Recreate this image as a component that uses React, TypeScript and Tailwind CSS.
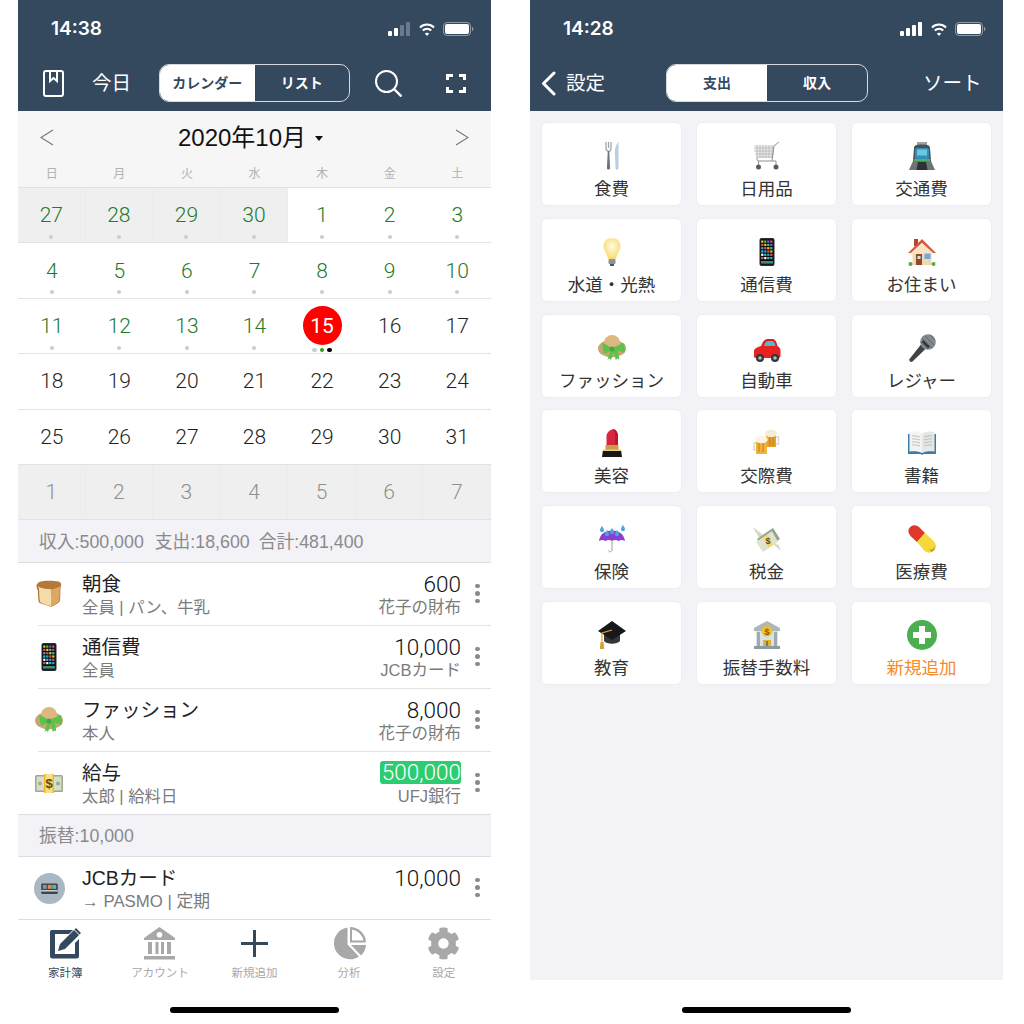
import { ReactNode } from "react";
import { FaCog } from "react-icons/fa";

const Svg = ({ children, size = 28 }: { children: ReactNode; size?: number }) => (
	<svg width={size} height={size} viewBox="0 0 28 28" className="shrink-0">
		{children}
	</svg>
);

const Bread = () => (
	<Svg size={28}>
		<path d="M1.500 6c0-3 3-4.500 7-5 5-.6 11-.5 15 .5 2 .5 3 2 2.600 4-.2 1.500-.6 2-.6 3l-.4 11.500c0 2-3 4-7 6-1 .5-2.500 .8-3.600 .2C11 25 6 24 4 22.500 3.200 21 3 14 2.900 10.500 2.300 9 1.500 8 1.500 6z" fill="#b8773a" />
		<path d="M3 6.500c3 1.800 8 2.500 13 2.800.8 5 .8 11 .4 17C12 25 7.500 24 5 22c-.8-4-.7-10-1-13.500C3.500 8 3 7 3 6.500z" fill="#f1dcaa" />
		<path d="M16 9.300c3-.2 6.500-1.500 9-3-.3 5-.5 10-.8 14.500-1.500 2-4.500 4-7.800 5.500.4-6 .4-12-.4-17z" fill="#dca864" />
	</Svg>
);

const screenColors = ["#f0c330", "#e74c8c", "#3aa0e0", "#52c26b", "#ffffff", "#e2574c", "#7d5bd0", "#35c2c9"];

const Phone = () => (
	<Svg>
		<rect x="6.500" y="0" width="15" height="28" rx="2" fill="#2b2b2f" />
		<rect x="7.500" y="1.500" width="13" height="25" fill="#0b0b0d" />
		{Array.from({ length: 24 }).map((_, i) => (
			<rect
				key={i}
				x={8.2 + (i % 4) * 3}
				y={2.5 + Math.floor(i / 4) * 3.3}
				width="2.200"
				height="2.200"
				fill={screenColors[(i * 3 + Math.floor(i / 4)) % 8]}
			/>
		))}
		<rect x="8" y="23" width="12" height="2.600" fill="#3f8f77" />
	</Svg>
);

const Hat = () => (
	<Svg>
		<ellipse cx="14" cy="14.500" rx="14" ry="9" fill="#c7a675" />
		<circle cx="14" cy="9" r="8" fill="#dcb77f" />
		<path d="M14 14 6 9.500c-1-.5-2 0-1.800 1l1.300 8c.2 1 1 1.200 2 .8l5-2.300-3 8.500 2.500-1 .8 2 3-8.500 2 8 1.500-1.500 2 1-1.500-9 5.500 2c1 .3 1.600-.3 1.600-1.200l-.4-7c0-1-1-1.400-2-.9z" fill="#5cc24a" />
		<circle cx="14" cy="15" r="2.500" fill="#49a63a" />
	</Svg>
);

const Money = () => (
	<Svg>
		<rect x="0" y="6" width="28" height="17" rx="1.500" fill="#9fa88f" />
		<rect x="1.500" y="7.500" width="25" height="14" fill="#d8dccb" />
		<circle cx="5" cy="14.500" r="2" fill="#a6b095" />
		<circle cx="23" cy="14.500" r="2" fill="#8fb08f" />
		<rect x="9" y="5" width="10" height="19" fill="#f8e08a" />
		<rect x="9" y="5" width="1.500" height="19" fill="#f3b81f" />
		<rect x="17.500" y="5" width="1.500" height="19" fill="#f3b81f" />
		<text x="14" y="19" textAnchor="middle" fontSize="13" fontWeight="700" fill="#5a4a20" fontFamily="Liberation Sans">$</text>
	</Svg>
);

const CardBadge = () => (
	<Svg size={31}>
		<circle cx="14" cy="14" r="14" fill="#a9b8c2" />
		<rect x="6.500" y="9.500" width="15" height="9.500" rx="1" fill="#3d4650" />
		<rect x="8" y="10.800" width="3.500" height="3.500" fill="#8a949c" />
		<rect x="12.500" y="10.800" width="3.500" height="3.500" fill="#df8a4f" />
		<rect x="16.500" y="10.800" width="3.500" height="3.500" fill="#5cb8a5" />
		<rect x="6.500" y="15.500" width="15" height="1.200" fill="#dfe4e8" />
	</Svg>
);

const Cutlery = () => (
	<Svg>
		<path d="M8 0v6M10.500 0v6M13 0v6M8 6c0 2 1 3 2.500 3.500S13 8 13 6" stroke="#9aa1a7" strokeWidth="1.200" fill="none" />
		<path d="M9.800 9h1.400l.9 17c0 2-3.200 2-3.200 0z" fill="#6d7379" />
		<path d="M17 12c-.5-4 .5-9 3.500-12v26c0 2.400-3 2.400-3 0z" fill="#b7cfe2" />
	</Svg>
);

const Cart = () => (
	<Svg>
		<path d="M1 3h20l-1 13H4z" fill="#e7e9ea" />
		<path d="M1 6h20M1 9h20M2 12h19M3 15h17M4 3v13M7 3v13M10 3v13M13 3v13M16 3v13M19 3v13" stroke="#a9adb0" strokeWidth=".6" />
		<path d="M4 16c-.5 2 .5 3 2 3h17M21 4l5-4M21 4l-2 15" stroke="#8b9094" strokeWidth="1" fill="none" />
		<circle cx="5.500" cy="25" r="2.500" fill="#585c60" />
		<circle cx="23" cy="25" r="2.500" fill="#585c60" />
		<path d="M5.500 19v4M23 19v4" stroke="#8b9094" />
	</Svg>
);

const Train = () => (
	<Svg>
		<path d="M9 0h10v4H9z" fill="#9aa0a4" />
		<path d="M6 6c0-3 3-3.500 8-3.500s8 .5 8 3.500l1 13H5z" fill="#48505a" />
		<rect x="7" y="6" width="14" height="11" rx="1.500" fill="#2f8fb8" />
		<rect x="9" y="7.500" width="10" height="6" fill="#6cc6dc" />
		<rect x="6" y="17" width="16" height="2" fill="#4db35e" />
		<path d="M5 19h18l4 9H1z" fill="#6e7377" />
		<path d="M10 20h8l1.500 8h-11z" fill="#2d3136" />
	</Svg>
);

const Bulb = () => (
	<Svg>
		<defs>
			<radialGradient id="bulbGlow" cx="50%" cy="40%" r="60%">
				<stop offset="0%" stopColor="#fffbe0" />
				<stop offset="100%" stopColor="#f8db6e" />
			</radialGradient>
		</defs>
		<path d="M14 0c5 0 8.500 3.500 8.500 8 0 5-3.500 7-4.500 13h-8C9 15 5.500 13 5.500 8c0-4.500 3.500-8 8.500-8z" fill="url(#bulbGlow)" />
		<rect x="10.500" y="21" width="7" height="5" rx="1" fill="#8d9297" />
		<rect x="12" y="26" width="4" height="2" fill="#50555a" />
	</Svg>
);

const House = () => (
	<Svg>
		<rect x="6" y="1" width="4" height="7" fill="#b5442e" />
		<rect x="4.500" y="12" width="19" height="15" fill="#f0d9b0" />
		<path d="M14 1 0 15h3L14 5l11 10h3z" fill="#d9573c" />
		<path d="M14 5 3 15v1h22v-1z" fill="#f6e4c2" />
		<rect x="8" y="16" width="6" height="11" fill="#8f4a2c" />
		<rect x="9.500" y="18" width="3" height="3" fill="#c9e0ee" />
		<rect x="16.500" y="15.500" width="6" height="5.500" fill="#6fa8dc" />
		<circle cx="2.500" cy="26" r="2" fill="#5aa845" />
		<circle cx="25.500" cy="26" r="2" fill="#5aa845" />
	</Svg>
);

const Car = () => (
	<Svg>
		<path d="M9 10c1-3 3-5 6-5h4c3 0 4 2 5 5l1 4H7z" fill="#d9201f" />
		<path d="M11 12c.5-3 2-5 4.500-5H19c2 0 3 2 3.500 5z" fill="#5cb5c9" />
		<path d="M1 17c0-2.500 3-3.500 7-5h15c3 0 4.500 2 4.500 5v5c0 1-.6 2-2 2H3c-1.500 0-2-1-2-2z" fill="#e8221f" />
		<circle cx="7" cy="24" r="4" fill="#33363a" />
		<circle cx="7" cy="24" r="1.800" fill="#b5b9bd" />
		<circle cx="22" cy="24" r="4" fill="#33363a" />
		<circle cx="22" cy="24" r="1.800" fill="#b5b9bd" />
	</Svg>
);

const Mic = () => (
	<Svg>
		<path d="M15 8 19.500 13 4.500 27.500c-.8.700-1.800.6-2.600-.2-.8-.8-.9-1.800-.2-2.600z" fill="#3f4347" />
		<circle cx="20" cy="8" r="7.800" fill="#85898d" />
		<path d="M14 4l10 10M17 2l9 9M12.500 8l7.500 7M22 1l5 5" stroke="#5d6165" strokeWidth=".8" />
		<path d="M14.500 7 21 13.500" stroke="#2f3236" strokeWidth="2.400" />
	</Svg>
);

const Lipstick = () => (
	<Svg>
		<path d="M8.500 16V7c0-3 3-6 7-7 3 1 4.500 4 4.500 7v9z" fill="#d8263c" />
		<path d="M15.500 0c3 1 4.500 4 4.500 7v9h-3V5z" fill="#b31b30" />
		<rect x="7.500" y="16" width="13" height="5" fill="#c5a04a" />
		<path d="M5 21h18l1 7H4z" fill="#17171a" />
		<rect x="5" y="20.500" width="18" height="1.500" fill="#e8cd7c" />
	</Svg>
);

const Beers = () => (
	<Svg>
		<path d="M13 5h10v13H13z" fill="#e7a02e" />
		<path d="M23 8h2.500v7H23" stroke="#d6d6d0" strokeWidth="1.400" fill="none" />
		<ellipse cx="18" cy="4.500" rx="6" ry="3.800" fill="#f5ecd6" />
		<path d="M3 11h11v14H3z" fill="#f0b23a" />
		<path d="M3 14H1v7h2" stroke="#d6d6d0" strokeWidth="1.400" fill="none" />
		<ellipse cx="8.500" cy="10.500" rx="6.200" ry="3.800" fill="#fbf4e2" />
		<path d="M6 14v9M10 14v9M17 8v9M20 8v9" stroke="#c77a1b" strokeWidth="1" />
	</Svg>
);

const Book = () => (
	<Svg>
		<path d="M0 5h28v20H15.500l-1.500 1-1.500-1H0z" fill="#3d7ba8" />
		<path d="M1.500 3c5-1 9-.5 12.500 1.500V24c-3.500-1.800-8-2.300-12.500-1.500z" fill="#f3f4f2" />
		<path d="M26.500 3c-5-1-9-.5-12.500 1.500V24c3.500-1.800 8-2.300 12.500-1.500z" fill="#e6e8e6" />
		<path d="M4 7c3-.3 5 0 8 1M4 10c3-.3 5 0 8 1M4 13c3-.3 5 0 8 1M4 16c3-.3 5 0 8 1M24 7c-3-.3-5 0-8 1M24 10c-3-.3-5 0-8 1M24 13c-3-.3-5 0-8 1M24 16c-3-.3-5 0-8 1" stroke="#a7aba8" strokeWidth=".7" fill="none" />
	</Svg>
);

const Drop = ({ x, y }: { x: number; y: number }) => (
	<path d={`M${x} ${y}c1.300 2 2 3 2 4.200a2 2 0 0 1-4 0c0-1.200.7-2.200 2-4.200z`} fill="#4aa6e0" />
);

const Umbrella = () => (
	<Svg>
		<path d="M1 16C2 9 7 5.500 14 5.500S26 9 27 16c-2.500-1.500-4-1.500-6.500 0-2-1.500-4.500-1.500-6.500 0-2-1.500-4.500-1.500-6.500 0C5 14.500 3.500 14.500 1 16z" fill="#8a3fd1" />
		<path d="M14 15v10c0 2-3 2.500-3.500 .5" stroke="#9a9da0" strokeWidth="1" fill="none" />
		<Drop x={4} y={1} />
		<Drop x={9} y={5} />
		<Drop x={14} y={3} />
		<Drop x={19} y={5} />
		<Drop x={25} y={0} />
	</Svg>
);

const MoneyWings = () => (
	<Svg>
		<path d="M10 10 0 2l3 6 1 0 1 4 2 0 2 3zM18 17l10 9-3-7-2 1-1-4-2 0-1-3z" fill="#d3d6cb" />
		<path d="M4 14 20 3l7 11-16 11z" fill="#97a387" />
		<path d="M3 17 19 6l6 11-15 10z" fill="#dfe3d2" />
		<path d="M9.500 13 14.500 9.500l6 10-5 3.500z" fill="#f5d977" />
		<text x="15" y="19" textAnchor="middle" fontSize="9" fontWeight="700" fill="#5a4a20" fontFamily="Liberation Sans">$</text>
	</Svg>
);

const Pill = () => (
	<Svg>
		<path d="M3 11.500C-.5 8-.2 4 2.500 1.800 5-.5 8.500-.3 11.500 2.500l5.500 5.500-8 9z" fill="#e0372b" />
		<path d="M9 17l8-9 8.500 8c3 3 3.200 7 .5 9.500-2.800 2.800-6.800 3-10-.2z" fill="#f7d83a" />
		<path d="M21 24c3 1 5 0 6-3 .5 3-1 5-3.500 6z" fill="#c99f1e" />
	</Svg>
);

const Cap = () => (
	<Svg>
		<path d="M6 13v7c3 3.500 13 3.500 16 0v-7z" fill="#33363a" />
		<path d="M14 0 28 10 14 19 0 10z" fill="#17181a" />
		<path d="M14 9 4 12v10" stroke="#d8a13a" strokeWidth="1.200" fill="none" />
		<path d="M2.500 21h3l.8 7H1.800z" fill="#d8a13a" />
	</Svg>
);

const Bank = () => (
	<Svg>
		<path d="M14 0 27 7v3H1V7z" fill="#a9b7bf" />
		<path d="M3 10h22v15H3z" fill="#dbe2e5" />
		<path d="M4 11h3v14H4zM21 11h3v14h-3z" fill="#9dacb4" />
		<rect x="10" y="19" width="8" height="6" fill="#e4b02e" />
		<rect x="13" y="20" width="2" height="5" fill="#6c7a82" />
		<circle cx="14" cy="10" r="5.500" fill="#f0bf2b" />
		<text x="14" y="13.500" textAnchor="middle" fontSize="9" fontWeight="700" fill="#7a5a10" fontFamily="Liberation Sans">$</text>
		<rect x="1" y="25" width="26" height="3" fill="#8d9ca4" />
	</Svg>
);

const PlusCircle = () => (
	<svg width={30} height={30} viewBox="0 0 30 30" className="shrink-0">
		<circle cx="15" cy="15" r="15" fill="#4cae4f" />
		<path d="M12 6h6v6h6v6h-6v6h-6v-6H6v-6h6z" fill="#fff" />
	</svg>
);

const StatusBar = ({ time, bars }: { time: string; bars: number }) => (
	<div className="flex h-[58px] items-center justify-between pl-[33px] pr-[17px] text-white">
		<span className="pt-[1px] font-['Inter',sans-serif] text-[19px] font-semibold">{time}</span>
		<div className="flex items-center gap-[8px]">
			<svg width="23" height="14" viewBox="0 0 23 14">
				{[0, 1, 2, 3].map((i) => (
					<rect key={i} x={i * 6} y={9 - i * 3} width="4" height={5 + i * 3} rx="1" fill={i < bars ? "#fff" : "#6c7b8c"} />
				))}
			</svg>
			<svg width="16" height="13" viewBox="0 0 16 13" fill="none" stroke="#fff" strokeWidth="2.200">
				<path d="M1 4.500c4-4 10-4 14 0" stroke="#fff" />
				<path d="M3.800 7.500c2.500-2.300 6-2.300 8.400 0" />
				<path d="M8 13 5.800 10.500c1.200-1 3.200-1 4.400 0z" fill="#fff" stroke="none" />
			</svg>
			<svg width="31" height="14" viewBox="0 0 31 14">
				<rect x=".5" y=".5" width="27" height="13" rx="3.500" fill="none" stroke="#8e9aa6" />
				<rect x="2" y="2" width="24" height="10" rx="2" fill="#fff" />
				<path d="M29 5c1 .3 1.500 1 1.500 2s-.5 1.700-1.500 2z" fill="#8e9aa6" />
			</svg>
		</div>
	</div>
);

const Segment = ({ left, right, width }: { left: string; right: string; width: string }) => (
	<div className={`flex h-[38px] overflow-hidden rounded-[10px] border-[1.5px] border-[#d5dade] text-[14px] font-bold ${width}`}>
		<div className="flex flex-1 items-center justify-center bg-white text-[#34495e]">{left}</div>
		<div className="flex flex-1 items-center justify-center text-white">{right}</div>
	</div>
);

const Chevron = ({ dir }: { dir: "left" | "right" }) => (
	<svg width="14" height="17" viewBox="0 0 14 17" fill="none" stroke="#777" strokeWidth="1.100">
		<path d={dir === "left" ? "M13 1 1 8.500 13 16" : "M1 1l12 7.500L1 16"} />
	</svg>
);

type Day = { n: number; tone: "green" | "dark" | "muted"; dot?: boolean; prev?: boolean; today?: boolean };

const green = (n: number, prev = false): Day => ({ n, tone: "green", dot: true, prev });
const dark = (n: number): Day => ({ n, tone: "dark" });

const weeks: Day[][] = [
	[green(27, true), green(28, true), green(29, true), green(30, true), green(1), green(2), green(3)],
	[green(4), green(5), green(6), green(7), green(8), green(9), green(10)],
	[green(11), green(12), green(13), green(14), { n: 15, tone: "dark", today: true }, dark(16), dark(17)],
	[18, 19, 20, 21, 22, 23, 24].map(dark),
	[25, 26, 27, 28, 29, 30, 31].map(dark),
	[1, 2, 3, 4, 5, 6, 7].map((n) => ({ n, tone: "muted" as const, prev: true })),
];

const toneClass = { green: "text-[#237a2b]", dark: "text-[#1f1f1f]", muted: "text-[#8f8f8f]" };

const DayCell = ({ day }: { day: Day }) => (
	<div className={`flex flex-col items-center ${day.prev ? "border-r border-[#ebebeb] bg-[#efefef]" : ""}`}>
		<div className="mt-[7px] flex h-[40px] items-center justify-center">
			{day.today ? (
				<span className="flex h-[39px] w-[39px] items-center justify-center rounded-full bg-[#fe0000] pt-[1px] font-normal text-white">{day.n}</span>
			) : (
				<span className={`pt-[2px] ${toneClass[day.tone]}`}>{day.n}</span>
			)}
		</div>
		{day.dot && <span className="h-[4px] w-[4px] rounded-full bg-[#cccccc]" />}
		{day.today && (
			<div className="mt-[2px] flex gap-[3px]">
				<span className="h-[4.500px] w-[4.500px] rounded-full bg-[#cccccc]" />
				<span className="h-[4.500px] w-[4.500px] rounded-full bg-[#28a010]" />
				<span className="h-[4.500px] w-[4.500px] rounded-full bg-black" />
			</div>
		)}
	</div>
);

const Kebab = () => (
	<div className="ml-[14px] flex w-[5px] flex-col gap-[3px] pb-[2px]">
		<span className="h-[4.500px] w-[4.500px] rounded-full bg-[#8a8a8a]" />
		<span className="h-[4.500px] w-[4.500px] rounded-full bg-[#8a8a8a]" />
		<span className="h-[4.500px] w-[4.500px] rounded-full bg-[#8a8a8a]" />
	</div>
);

type Entry = { icon: ReactNode; title: string; sub: string; amount: string; account?: string; highlight?: boolean; last?: boolean };

const entries: Entry[] = [
	{ icon: <Bread />, title: "朝食", sub: "全員 | パン、牛乳", amount: "600", account: "花子の財布" },
	{ icon: <Phone />, title: "通信費", sub: "全員", amount: "10,000", account: "JCBカード" },
	{ icon: <Hat />, title: "ファッション", sub: "本人", amount: "8,000", account: "花子の財布" },
	{ icon: <Money />, title: "給与", sub: "太郎 | 給料日", amount: "500,000", account: "UFJ銀行", highlight: true, last: true },
];

const amountFont = "font-['Roboto',sans-serif] font-light";

const EntryRow = ({ entry }: { entry: Entry }) => (
	<div className={`bg-white pl-[20px] ${entry.last ? "h-[62px]" : "h-[63px]"}`}>
		<div className={`flex h-full items-center border-[#e3e3e3] pr-[11px] ${entry.last ? "" : "border-b"}`}>
			<div className="-ml-[20px] mr-[2px] flex w-[62px] shrink-0 justify-center">{entry.icon}</div>
			<div className="flex flex-1 items-center justify-between">
				<div className="flex flex-col">
					<span className="text-[19.500px] leading-[26px] text-[#222222]">{entry.title}</span>
					<span className="text-[16.400px] leading-[21px] text-[#7b7b7b]">{entry.sub}</span>
				</div>
				<div className="flex flex-col items-end">
					{entry.highlight ? (
						<span className={`my-[1.500px] rounded-[3px] bg-[#2ecc71] pl-[2px] text-[22.500px] leading-[23px] text-white ${amountFont}`}>{entry.amount}</span>
					) : (
						<span className={`text-[22.500px] leading-[26px] text-[#111111] ${amountFont}`}>{entry.amount}</span>
					)}
					<span className="text-[16.500px] leading-[21px] text-[#7b7b7b]">{entry.account}</span>
				</div>
			</div>
			<Kebab />
		</div>
	</div>
);

const EditIcon = () => (
	<svg width="33" height="33" viewBox="0 0 33 33">
		<path d="M2 3h22l-4 4H6v20h20V16l4-4v17a2.500 2.500 0 0 1-2.500 2.500h-24A2.500 2.500 0 0 1 1 29V5a2.500 2.500 0 0 1 1-2z" fill="#34495e" />
		<path d="M9 24l2-7L25 3l5 5-14 14zM27 1l5 5-1.500 1.500-5-5z" fill="#34495e" />
	</svg>
);

const BankIcon = () => (
	<svg width="33" height="33" viewBox="0 0 33 33" fill="#a8a8a8">
		<path fillRule="evenodd" d="M16.500 0 32 11v2H1v-2zm0 5a2.800 2.800 0 1 0 0 5.600 2.800 2.800 0 0 0 0-5.600z" />
		<path d="M5 15h4v12H5zM12.500 15h3v12h-3zM18 15h3v12h-3zM24 15h4v12h-4zM1 29h31v3.500H1z" />
	</svg>
);

const PlusIcon = () => (
	<svg width="27" height="27" viewBox="0 0 27 27" fill="#34495e">
		<path d="M12 0h3v12h12v3H15v12h-3V15H0v-3h12z" />
	</svg>
);

const PieIcon = () => (
	<svg width="33" height="33" viewBox="0 0 33 33" fill="#a8a8a8">
		<path d="M14.500 .5A16 16 0 1 0 26 29.500L14.500 17.500z" />
		<path fillRule="evenodd" d="M17 0a16 16 0 0 1 16 15.500H17zm2 2.500v11h11.500A14 14 0 0 0 19 2.500z" />
		<path d="M18 18h15a16 16 0 0 1-5 10.500z" />
	</svg>
);

const tabs = [
	{ label: "家計簿", icon: <EditIcon />, active: true },
	{ label: "アカウント", icon: <BankIcon /> },
	{ label: "新規追加", icon: <PlusIcon /> },
	{ label: "分析", icon: <PieIcon /> },
	{ label: "設定", icon: <FaCog size={33} color="#a8a8a8" /> },
];

const HomeBar = () => (
	<div className="flex justify-center bg-white pt-[27px]">
		<div className="h-[6px] w-[169px] rounded-full bg-black" />
	</div>
);

const LedgerScreen = () => (
	<div className="flex w-[473px] flex-col">
		<header className="h-[111px] bg-[#34495e]">
			<StatusBar time="14:38" bars={2} />
			<div className="mt-[6px] flex items-center pl-[25px] text-white">
				<svg width="21" height="27" viewBox="0 0 21 27" fill="none" stroke="#fff" strokeWidth="2">
					<rect x="1" y="1" width="19" height="25" rx="2" />
					<path d="M7 1v10l3.500-3 3.500 3V1" />
				</svg>
				<span className="ml-[28px] pt-[2px] text-[19.500px]">今日</span>
				<div className="ml-[28px]">
					<Segment left="カレンダー" right="リスト" width="w-[191px]" />
				</div>
				<svg className="ml-[25px]" width="27" height="27" viewBox="0 0 27 27" fill="none" stroke="#fff" strokeWidth="2">
					<circle cx="11.500" cy="11.500" r="10.500" />
					<path d="M19 19l7.500 7.500" strokeWidth="2.400" />
				</svg>
				<svg className="ml-[44px]" width="20" height="19" viewBox="0 0 20 19" fill="none" stroke="#fff" strokeWidth="3">
					<path d="M1.500 6V1.500H7M13 1.500h5.500V6M18.500 13v4.500H13M7 17.500H1.500V13" />
				</svg>
			</div>
		</header>

		<div className="h-[77px] border-b border-[#e0e0e0] bg-[#f6f6f6]">
			<div className="flex h-[53px] items-center justify-between px-[22px]">
				<Chevron dir="left" />
				<div className="flex items-center pr-[8px] text-[24px] text-[#111111]">
					2020年10月
					<span className="ml-[9px] mt-[2px] h-0 w-0 border-x-[4px] border-t-[5px] border-x-transparent border-t-[#111111]" />
				</div>
				<Chevron dir="right" />
			</div>
			<div className="grid grid-cols-7 text-center text-[12px] leading-[20px] text-[#b2b2b2]">
				{["日", "月", "火", "水", "木", "金", "土"].map((d) => (
					<span key={d}>{d}</span>
				))}
			</div>
		</div>

		<div className={`bg-white text-[21px] ${amountFont}`}>
			{weeks.map((week, i) => (
				<div key={i} className="grid h-[55.400px] grid-cols-7 border-b border-[#e3e3e3]">
					{week.map((day) => (
						<DayCell key={day.n} day={day} />
					))}
				</div>
			))}
		</div>

		<div className="flex h-[43px] items-center border-b border-[#dedee2] bg-[#f2f2f7] pl-[21px] pt-[1px] text-[17.800px] text-[#8a8a8e]">
			<span>収入:500,000</span>
			<span className="ml-[11px]">支出:18,600</span>
			<span className="ml-[9px]">合計:481,400</span>
		</div>

		{entries.map((entry) => (
			<EntryRow key={entry.title} entry={entry} />
		))}

		<div className="flex h-[43px] items-center border-y border-[#dedee2] bg-[#f2f2f7] pl-[21px] text-[17.800px] text-[#8a8a8e]">振替:10,000</div>

		<div className="flex h-[63px] items-center border-b border-[#dedee2] bg-white pr-[11px]">
			<div className="mr-[2px] flex w-[62px] shrink-0 justify-center">
				<CardBadge />
			</div>
			<div className="flex flex-1 justify-between">
				<div className="flex flex-col">
					<span className="text-[19.500px] leading-[26px] text-[#222222]">JCBカード</span>
					<span className="text-[16.800px] leading-[21px] text-[#7b7b7b]">→ PASMO | 定期</span>
				</div>
				<span className={`text-[22.500px] leading-[26px] text-[#111111] ${amountFont}`}>10,000</span>
			</div>
			<Kebab />
		</div>

		<nav className="grid h-[60px] grid-cols-5 bg-white">
			{tabs.map((tab) => (
				<div key={tab.label} className="flex flex-col items-center pt-[7px]">
					<div className="flex h-[33px] items-center justify-center">{tab.icon}</div>
					<span className={`mt-[5px] text-[11.500px] leading-[16px] ${tab.active ? "text-[#34495e]" : "text-[#a8a8a8]"}`}>{tab.label}</span>
				</div>
			))}
		</nav>
		<HomeBar />
	</div>
);

const categories = [
	{ label: "食費", icon: <Cutlery /> },
	{ label: "日用品", icon: <Cart /> },
	{ label: "交通費", icon: <Train /> },
	{ label: "水道・光熱", icon: <Bulb /> },
	{ label: "通信費", icon: <Phone /> },
	{ label: "お住まい", icon: <House /> },
	{ label: "ファッション", icon: <Hat /> },
	{ label: "自動車", icon: <Car /> },
	{ label: "レジャー", icon: <Mic /> },
	{ label: "美容", icon: <Lipstick /> },
	{ label: "交際費", icon: <Beers /> },
	{ label: "書籍", icon: <Book /> },
	{ label: "保険", icon: <Umbrella /> },
	{ label: "税金", icon: <MoneyWings /> },
	{ label: "医療費", icon: <Pill /> },
	{ label: "教育", icon: <Cap /> },
	{ label: "振替手数料", icon: <Bank /> },
	{ label: "新規追加", icon: <PlusCircle />, accent: true },
];

const CategoryScreen = () => (
	<div className="flex w-[473px] flex-col">
		<header className="h-[111px] bg-[#34495e]">
			<StatusBar time="14:28" bars={4} />
			<div className="mt-[6px] flex items-center pl-[11px] text-white">
				<svg width="15" height="25" viewBox="0 0 15 25" fill="none" stroke="#fff" strokeWidth="3" strokeLinecap="round" strokeLinejoin="round">
					<path d="M13 2 2.500 12.500 13 23" />
				</svg>
				<span className="ml-[10px] pt-[2px] text-[19.500px]">設定</span>
				<div className="ml-[61px]">
					<Segment left="支出" right="収入" width="w-[202px]" />
				</div>
				<span className="ml-[55px] pt-[2px] text-[19.500px]">ソート</span>
			</div>
		</header>
		<div className="h-[869px] bg-[#f2f2f7] px-[11px] pt-[11px]">
			<div className="grid grid-cols-3 gap-x-[14px] gap-y-[11.800px]">
				{categories.map((c) => (
					<div key={c.label} className="flex h-[84px] flex-col items-center rounded-[6px] border border-[#eeeef2] bg-white pt-[19px]">
						<div className="flex h-[28px] items-center justify-center">{c.icon}</div>
						<span className={`mt-[7px] text-[17.500px] leading-[24px] ${c.accent ? "text-[#f58a2e]" : "text-[#333333]"}`}>{c.label}</span>
					</div>
				))}
			</div>
		</div>
		<HomeBar />
	</div>
);

export default function App() {
	return (
		<div className="flex h-[1024px] w-[1024px] gap-[39px] overflow-hidden bg-white pl-[18px] font-['Liberation_Sans','Noto_Sans_CJK_JP',sans-serif]">
			<LedgerScreen />
			<CategoryScreen />
		</div>
	);
}
